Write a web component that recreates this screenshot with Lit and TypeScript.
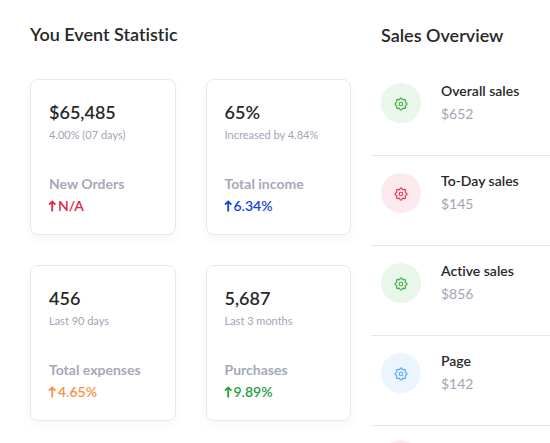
import { LitElement, html, css, svg, nothing } from "lit";
import { customElement, property } from "lit/decorators.js";
import { classMap } from "lit/directives/class-map.js";

type Tone = "red" | "blue" | "orange" | "green";

interface Stat {
  value: string;
  note: string;
  label: string;
  change: string;
  tone: Tone;
}

interface Sale {
  name?: string;
  amount?: string;
  tone: "green" | "red" | "sky";
}

const STATS: Stat[] = [
  { value: "$65,485", note: "4.00% (07 days)", label: "New Orders", change: "N/A", tone: "red" },
  { value: "65%", note: "Increased by 4.84%", label: "Total income", change: "6.34%", tone: "blue" },
  { value: "456", note: "Last 90 days", label: "Total expenses", change: "4.65%", tone: "orange" },
  { value: "5,687", note: "Last 3 months", label: "Purchases", change: "9.89%", tone: "green" },
];

const SALES: Sale[] = [
  { name: "Overall sales", amount: "$652", tone: "green" },
  { name: "To-Day sales", amount: "$145", tone: "red" },
  { name: "Active sales", amount: "$856", tone: "green" },
  { name: "Page", amount: "$142", tone: "sky" },
  { tone: "red" },
];

// Eight-lobed gear outline, built around the centre of a 14x14 box.
const gearPath = (() => {
  const points: string[] = [];
  const steps = 64;
  for (let i = 0; i < steps; i++) {
    const a = (i / steps) * Math.PI * 2;
    const r = 5.3 + 0.7 * Math.tanh(2 * Math.cos(8 * a));
    points.push(`${(7 + r * Math.cos(a)).toFixed(2)} ${(7 + r * Math.sin(a)).toFixed(2)}`);
  }
  return `M${points.join("L")}Z`;
})();

const gear = svg`<path d=${gearPath} /><circle cx="7" cy="7" r="1.8" />`;

@customElement("stat-card")
export class StatCard extends LitElement {
  @property({ attribute: false }) stat!: Stat;

  static styles = css`
    :host {
      display: block;
      box-sizing: border-box;
      padding: 20px 18px 17px;
      border: 1px solid #e6e6f4;
      border-radius: 8px;
      background: #fff;
      box-shadow: 0 5px 10px rgba(60, 60, 100, 0.04);
    }
    .value {
      margin: 0;
      font-size: 18px;
      line-height: 24px;
      font-weight: 600;
      color: #282828;
    }
    .note {
      margin: 0 0 27px;
      font-size: 11px;
      line-height: 22px;
      color: #a1a5b5;
    }
    .label {
      margin: 0;
      font-size: 14px;
      line-height: 22px;
      font-weight: 700;
      color: #a5a9b9;
    }
    .change {
      display: flex;
      align-items: center;
      gap: 1px;
      margin: 0;
      font-size: 14px;
      line-height: 22px;
      font-weight: 600;
    }
    .arrow {
      width: 8px;
      height: 12px;
      overflow: visible;
      fill: none;
      stroke: currentColor;
      stroke-width: 1.8;
    }
    .red { color: #dc2645; }
    .blue { color: #1243d6; }
    .orange { color: #fd8f43; }
    .green { color: #23a03f; }
  `;

  render() {
    const s = this.stat;
    return html`
      <h3 class="value">${s.value}</h3>
      <p class="note">${s.note}</p>
      <p class="label">${s.label}</p>
      <p class=${classMap({ change: true, [s.tone]: true })}>
        <svg class="arrow" viewBox="0 0 8 12" aria-hidden="true">
          <path d="M3.2 11.5V1.5M0 4.6L3.2 1.4L6.4 4.6" />
        </svg>
        <span>${s.change}</span>
      </p>
    `;
  }
}

@customElement("sale-row")
export class SaleRow extends LitElement {
  @property({ attribute: false }) sale!: Sale;

  static styles = css`
    :host {
      display: flex;
      box-sizing: border-box;
      gap: 20px;
      height: 90px;
      padding: 17px 10px 0;
      border-bottom: 1px solid #e6e6f0;
    }
    :host(:last-child) {
      padding-top: 14px;
      border-bottom: 0;
    }
    .badge {
      display: grid;
      place-items: center;
      flex: none;
      box-sizing: border-box;
      width: 40px;
      height: 40px;
      padding-top: 2px;
      border-radius: 50%;
    }
    .gear {
      width: 14px;
      height: 14px;
      fill: none;
      stroke: currentColor;
      stroke-width: 1.1;
    }
    .green { background: #e9f6ea; color: #3cb043; }
    .red { background: #fdeaee; color: #e0344f; }
    .sky { background: #eaf5ff; color: #55a8f5; }
    .name,
    .amount {
      margin: 0;
      font-size: 14px;
      line-height: 16px;
      white-space: nowrap;
    }
    .name {
      margin-bottom: 7px;
      font-weight: 600;
      color: #282828;
    }
    .amount { color: #a1a5b5; }
  `;

  render() {
    const s = this.sale;
    return html`
      <div class=${classMap({ badge: true, [s.tone]: true })}>
        <svg class="gear" viewBox="0 0 14 14" aria-hidden="true">${gear}</svg>
      </div>
      ${s.name
        ? html`<div>
            <h3 class="name">${s.name}</h3>
            <p class="amount">${s.amount}</p>
          </div>`
        : nothing}
    `;
  }
}

@customElement("app-root")
export class AppRoot extends LitElement {
  static styles = css`
    :host {
      display: grid;
      grid-template-columns: minmax(0, 1fr) minmax(179px, 32%);
      align-items: start;
      height: 100vh;
      overflow: hidden;
      background: #fff;
      font-family: Lato, "Liberation Sans", sans-serif;
      font-variant-ligatures: none;
    }
    .title {
      margin: 0;
      font-size: 18px;
      line-height: 24px;
      font-weight: 600;
      color: #282828;
    }
    .stats { padding: 22px 20px 22px 30px; }
    .cards {
      display: grid;
      grid-template-columns: repeat(2, minmax(0, 1fr));
      gap: 30px;
      margin-top: 33px;
    }
    .sales { padding-top: 23px; }
    .sales .title { padding-left: 10px; }
    .rows { margin-top: 19px; }
  `;

  render() {
    return html`
      <section class="stats">
        <h2 class="title">You Event Statistic</h2>
        <div class="cards">${STATS.map((s) => html`<stat-card .stat=${s}></stat-card>`)}</div>
      </section>
      <section class="sales">
        <h2 class="title">Sales Overview</h2>
        <div class="rows">${SALES.map((s) => html`<sale-row .sale=${s}></sale-row>`)}</div>
      </section>
    `;
  }
}
